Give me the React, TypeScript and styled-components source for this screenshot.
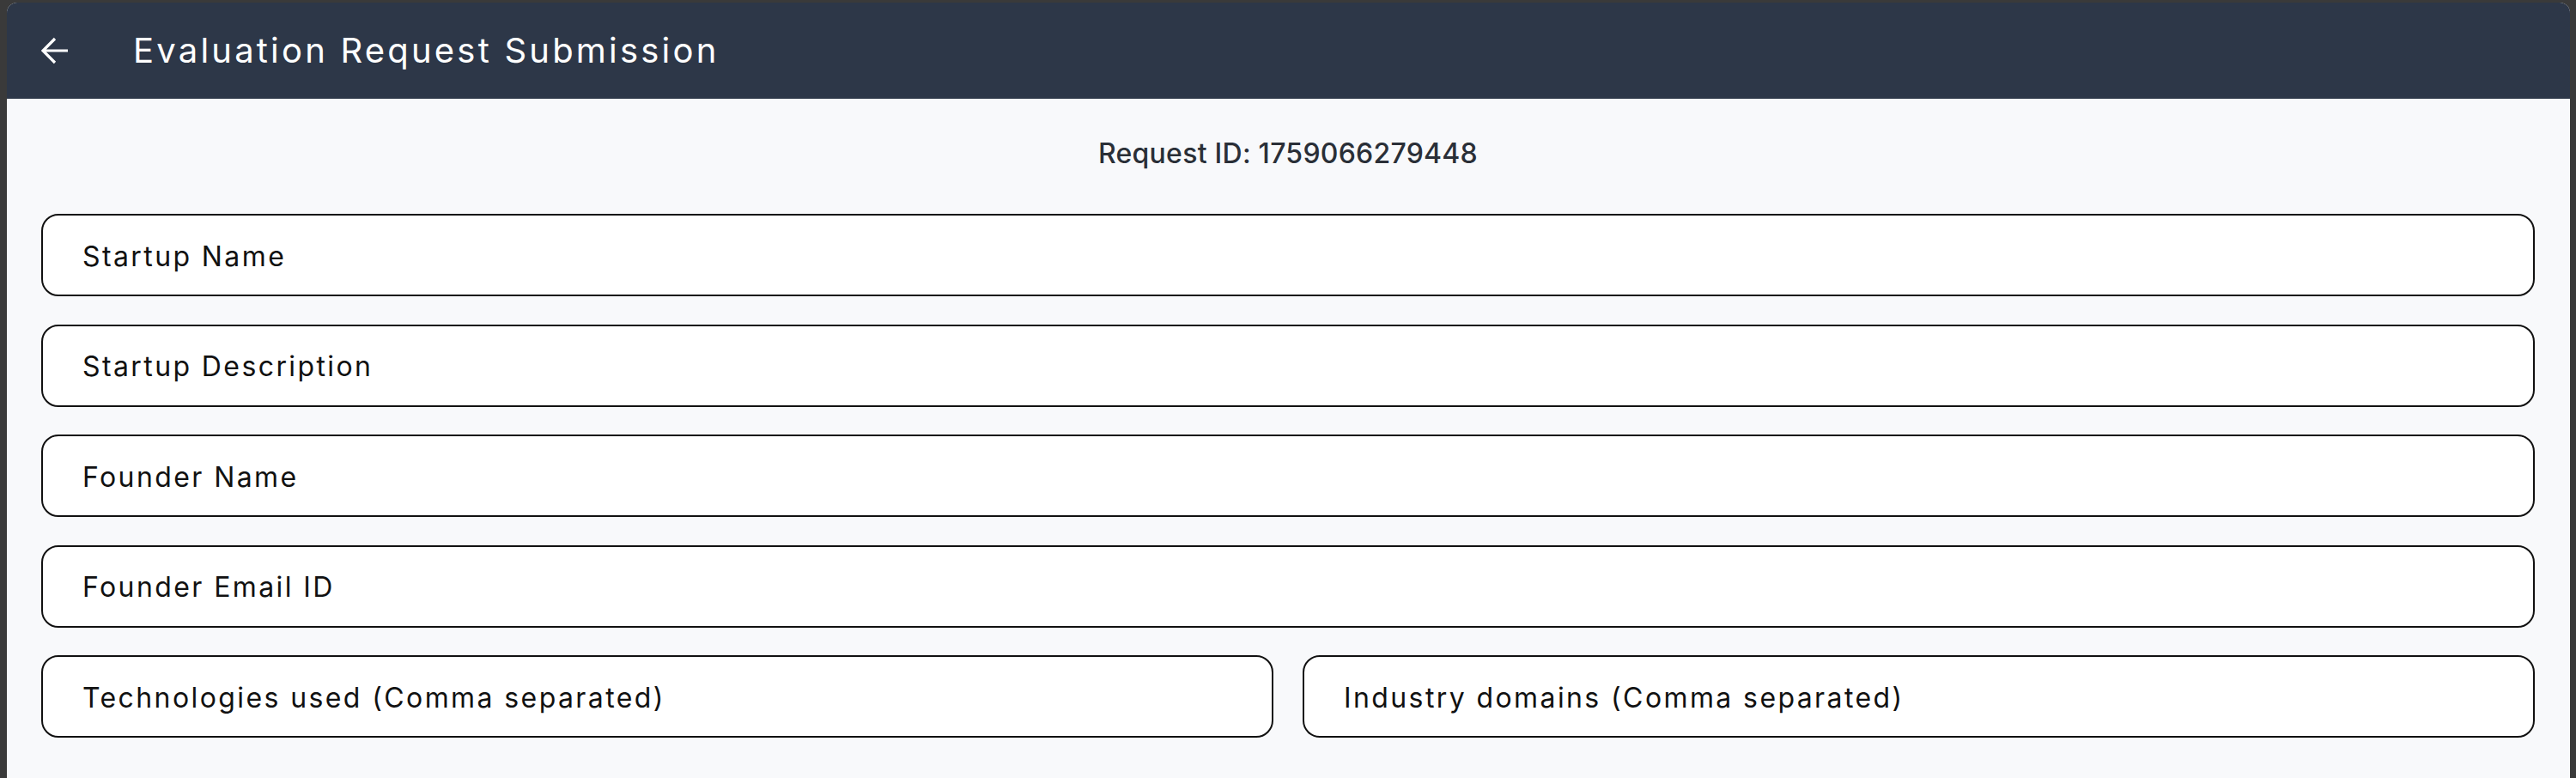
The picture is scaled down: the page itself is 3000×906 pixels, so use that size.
import React from "react";
import styled, { createGlobalStyle } from "styled-components";

const Global = createGlobalStyle`
  html, body {
    margin: 0;
    padding: 0;
    background: #3a3a3a;
  }
  body {
    font-family: "Inter", "Open Sans", sans-serif;
  }
  * { box-sizing: border-box; }
`;

const Frame = styled.div`
  padding: 3px 7px 0 8px;
  min-height: 906px;
  display: flex;
  flex-direction: column;
`;

const Card = styled.div`
  flex: 1;
  display: flex;
  flex-direction: column;
  background: #f8f9fb;
  border-radius: 12px 12px 0 0;
  overflow: hidden;
`;

const AppBar = styled.header`
  height: 112px;
  flex-shrink: 0;
  background: #2d3748;
  display: flex;
  align-items: center;
  padding-left: 32px;
  gap: 67px;
`;

const BackButton = styled.button`
  width: 48px;
  height: 48px;
  display: flex;
  align-items: center;
  justify-content: center;
  background: none;
  border: none;
  padding: 0;
  color: #ffffff;
  cursor: pointer;
`;

const Title = styled.h1`
  margin: 0;
  font-family: "Inter", "Open Sans", sans-serif;
  font-weight: 400;
  font-size: 40px;
  line-height: 48px;
  color: #ffffff;
  letter-spacing: 3.2px;
`;

const Body = styled.main`
  display: flex;
  flex-direction: column;
  padding: 40px 41px 0 40px;
`;

const RequestId = styled.div`
  text-align: center;
  font-size: 32px;
  line-height: 48px;
  font-weight: 500;
  color: #2a2f37;
  letter-spacing: 0.25px;
  margin-bottom: 46px;
`;

const Fields = styled.div`
  display: flex;
  flex-direction: column;
  gap: 32.5px;
`;

const Row = styled.div`
  display: flex;
  gap: 34px;
`;

const Input = styled.input<{ $grow?: boolean }>`
  display: block;
  width: 100%;
  flex: ${(p) => (p.$grow ? "1 1 0" : "0 0 auto")};
  min-width: 0;
  height: 96px;
  border: 2px solid #111111;
  border-radius: 20px;
  background: #ffffff;
  padding: 2px 46px 0;
  font-family: "Inter", "Open Sans", sans-serif;
  font-size: 32px;
  letter-spacing: 2.4px;
  color: #111111;
  outline: none;
  &::placeholder {
    color: #111111;
    opacity: 1;
  }
`;

const ArrowIcon = () => (
  <svg width="32" height="32" viewBox="0 0 32 32" fill="none">
    <path
      d="M31 16H2.5M16 2L2 16l14 14"
      stroke="currentColor"
      strokeWidth="3.2"
      strokeLinecap="butt"
      strokeLinejoin="miter"
    />
  </svg>
);

export default function App() {
  return (
    <>
      <Global />
      <Frame>
        <Card>
          <AppBar>
            <BackButton aria-label="Back">
              <ArrowIcon />
            </BackButton>
            <Title>Evaluation Request Submission</Title>
          </AppBar>
          <Body>
            <RequestId>Request ID: 1759066279448</RequestId>
            <Fields>
              <Input placeholder="Startup Name" />
              <Input placeholder="Startup Description" />
              <Input placeholder="Founder Name" />
              <Input placeholder="Founder Email ID" />
              <Row>
                <Input $grow placeholder="Technologies used (Comma separated)" />
                <Input $grow placeholder="Industry domains (Comma separated)" />
              </Row>
            </Fields>
          </Body>
        </Card>
      </Frame>
    </>
  );
}
